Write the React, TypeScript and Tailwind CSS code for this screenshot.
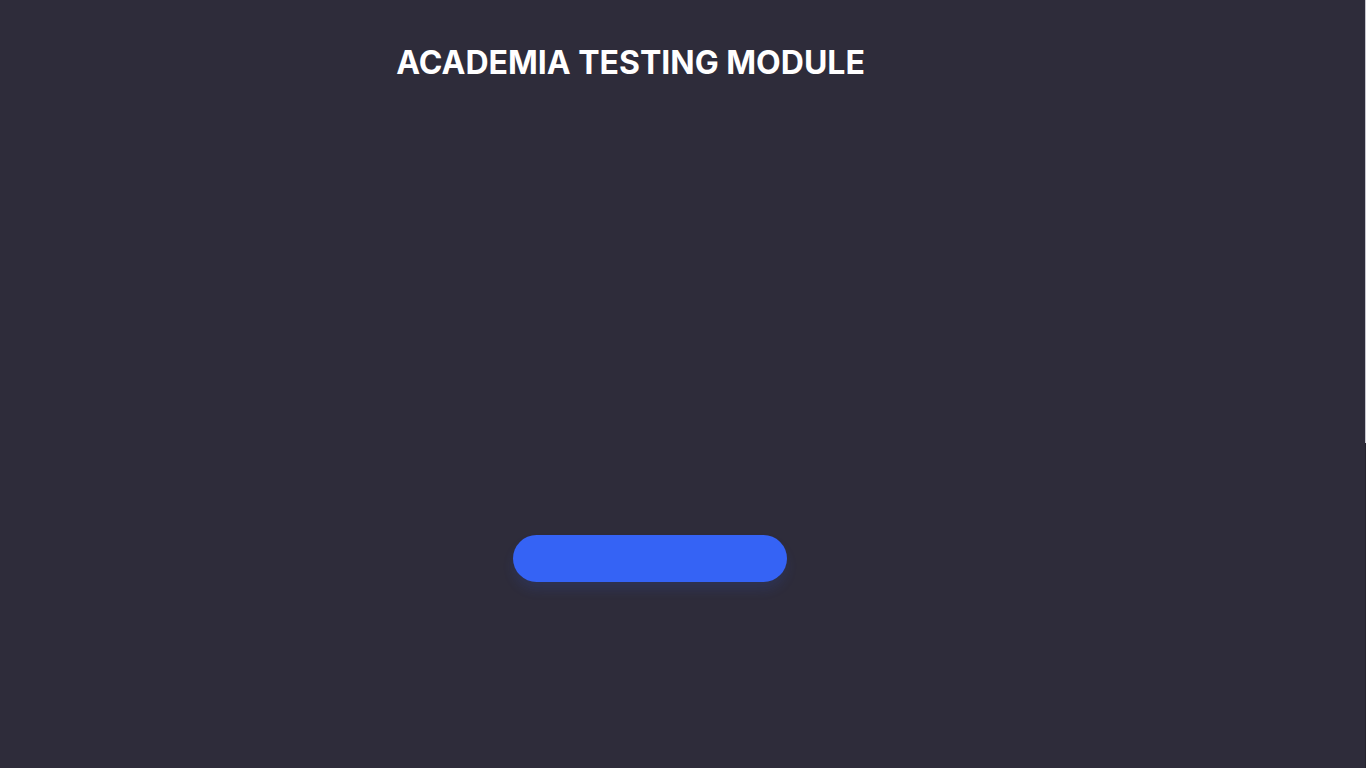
export default function App() {
  return (
    <div className="relative min-h-[768px] w-full bg-[#2e2c3a] overflow-hidden" style={{ fontFamily: "Inter, 'Noto Sans', sans-serif" }}>
      {/* Title */}
      <div className="flex justify-center pr-[105px] pt-[43px]">
        <h1 className="text-[32px] leading-[40px] font-bold text-white">ACADEMIA TESTING MODULE</h1>
      </div>

      {/* Start button */}
      <div className="flex justify-center pr-[66px] mt-[452px]">
        <button className="w-[274px] h-[47px] rounded-full bg-[#3563f5] shadow-[0_8px_12px_rgba(53,99,245,0.12)]" />
      </div>

      {/* Scroll indicator */}
      <div className="absolute right-0 top-0 h-[443px] w-[1px] bg-[#c4c4cc]" />
      <div className="absolute right-0 top-[443px] bottom-0 w-[1px] bg-[#26242f]" />
    </div>
  );
}
